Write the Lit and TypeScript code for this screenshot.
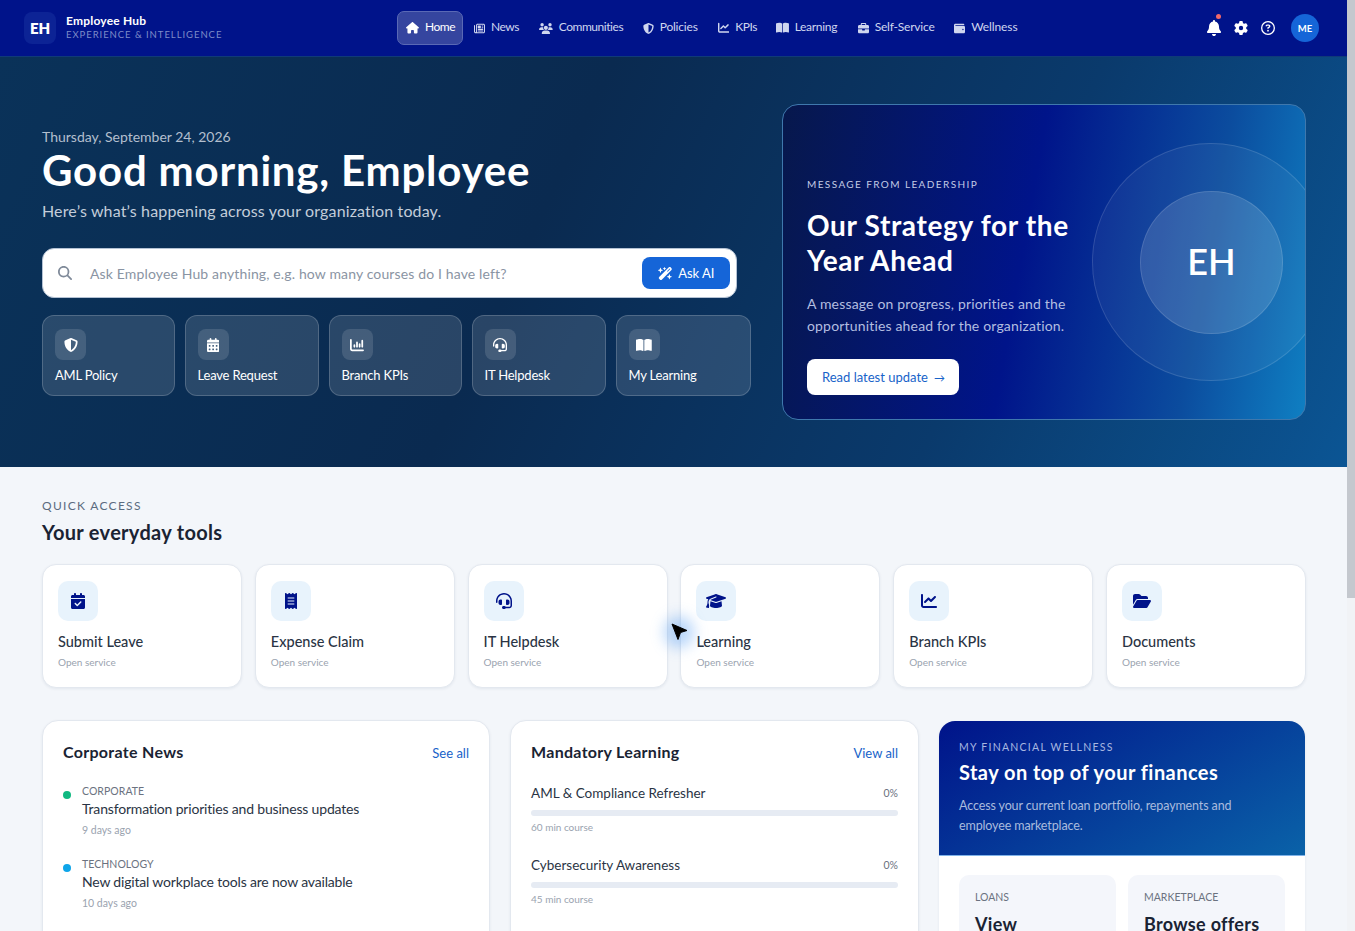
import { LitElement, html, css, svg } from "lit";
import { customElement } from "lit/decorators.js";

const I: Record<string, [number, string]> = {
  house: [576, "M575.8 255.5c0 18-15 32.1-32 32.1h-32l.7 160.2c0 2.7-.2 5.4-.5 8.1V472c0 22.1-17.9 40-40 40H456c-1.1 0-2.2 0-3.3-.1c-1.4 .1-2.8 .1-4.2 .1H416 392c-22.1 0-40-17.9-40-40V448 384c0-17.7-14.3-32-32-32H256c-17.7 0-32 14.3-32 32v64 24c0 22.1-17.9 40-40 40H160 128.1c-1.5 0-3-.1-4.5-.2c-1.2 .1-2.4 .2-3.6 .2H104c-22.1 0-40-17.9-40-40V360c0-.9 0-1.9 .1-2.8V287.6H32c-18 0-32-14-32-32.1c0-9 3-17 10-24L266.4 8c7-7 15-8 22-8s15 2 21 7L564.8 231.5c8 7 12 15 11 24z"],
  search: [512, "M416 208c0 45.9-14.9 88.3-40 122.7L502.6 457.4c12.5 12.5 12.5 32.8 0 45.3s-32.8 12.5-45.3 0L330.7 376c-34.4 25.2-76.8 40-122.7 40C93.1 416 0 322.9 0 208S93.1 0 208 0S416 93.1 416 208zM208 352a144 144 0 1 0 0-288 144 144 0 1 0 0 288z"],
  bell: [448, "M224 0c-17.7 0-32 14.3-32 32V51.2C119 66 64 130.6 64 208v18.8c0 47-17.3 92.4-48.5 127.6l-7.4 8.3c-8.4 9.4-10.4 22.9-5.3 34.4S19.4 416 32 416H416c12.6 0 24-7.4 29.2-18.9s3.1-25-5.3-34.4l-7.4-8.3C401.3 319.2 384 273.9 384 226.8V208c0-77.4-55-142-128-156.8V32c0-17.7-14.3-32-32-32zm45.3 493.3c12-12 18.7-28.3 18.7-45.3H224 160c0 17 6.7 33.3 18.7 45.3s28.3 18.7 45.3 18.7s33.3-6.7 45.3-18.7z"],
  gear: [512, "M495.9 166.6c3.2 8.7 .5 18.4-6.4 24.6l-43.3 39.4c1.1 8.3 1.7 16.8 1.7 25.4s-.6 17.1-1.7 25.4l43.3 39.4c6.9 6.2 9.6 15.9 6.4 24.6c-4.4 11.9-9.7 23.3-15.8 34.3l-4.7 8.1c-6.6 11-14 21.4-22.1 31.2c-5.9 7.2-15.7 9.6-24.5 6.8l-55.7-17.7c-13.4 10.3-28.2 18.9-44 25.4l-12.5 57.1c-2 9.1-9 16.3-18.2 17.8c-13.8 2.3-28 3.5-42.5 3.5s-28.7-1.2-42.5-3.5c-9.2-1.5-16.2-8.7-18.2-17.8l-12.5-57.1c-15.8-6.5-30.6-15.1-44-25.4L83.1 425.9c-8.8 2.8-18.6 .3-24.5-6.8c-8.1-9.8-15.5-20.2-22.1-31.2l-4.7-8.1c-6.1-11-11.4-22.4-15.8-34.3c-3.2-8.7-.5-18.4 6.4-24.6l43.3-39.4C64.6 273.1 64 264.6 64 256s.6-17.1 1.7-25.4L22.4 191.2c-6.9-6.2-9.6-15.9-6.4-24.6c4.4-11.9 9.7-23.3 15.8-34.3l4.7-8.1c6.6-11 14-21.4 22.1-31.2c5.9-7.2 15.7-9.6 24.5-6.8l55.7 17.7c13.4-10.3 28.2-18.9 44-25.4l12.5-57.1c2-9.1 9-16.3 18.2-17.8C227.3 1.2 241.5 0 256 0s28.7 1.2 42.5 3.5c9.2 1.5 16.2 8.7 18.2 17.8l12.5 57.1c15.8 6.5 30.6 15.1 44 25.4l55.7-17.7c8.8-2.8 18.6-.3 24.5 6.8c8.1 9.8 15.5 20.2 22.1 31.2l4.7 8.1c6.1 11 11.4 22.4 15.8 34.3zM256 336a80 80 0 1 0 0-160 80 80 0 1 0 0 160z"],
  cap: [640, "M320 32c-8.1 0-16.1 1.4-23.7 4.1L15.8 137.4C6.3 140.9 0 149.9 0 160s6.3 19.1 15.8 22.6l57.9 20.9C57.3 229.3 48 259.8 48 291.9v28.1c0 28.4-10.8 57.7-22.3 80.8c-6.5 13-13.9 25.8-22.5 37.6C0 442.7-.9 448.3 .9 453.4s6 8.9 11.2 10.2l64 16c4.2 1.1 8.7 .3 12.4-2s6.3-6.1 7.1-10.4c8.6-42.8 4.3-81.2-2.1-108.7C90.3 344.3 86 329.8 80 316.5V291.9c0-30.2 10.2-58.7 27.9-81.5c12.9-15.5 29.6-28 49.2-35.7l157-61.7c8.2-3.2 17.5 .8 20.7 9s-.8 17.5-9 20.7l-157 61.7c-12.4 4.9-23.3 12.4-32.2 21.6l159.6 57.6c7.6 2.7 15.6 4.1 23.7 4.1s16.1-1.4 23.7-4.1L624.2 182.6c9.5-3.4 15.8-12.5 15.8-22.6s-6.3-19.1-15.8-22.6L343.7 36.1C336.1 33.4 328.1 32 320 32zM128 408c0 35.3 86 72 192 72s192-36.7 192-72L496.7 262.6 354.5 314c-11.1 4-22.8 6-34.5 6s-23.5-2-34.5-6L143.3 262.6 128 408z"],
  folder: [576, "M88.7 223.8L0 375.8V96C0 60.7 28.7 32 64 32H181.5c17 0 33.3 6.7 45.3 18.7l26.5 26.5c12 12 28.3 18.7 45.3 18.7H416c35.3 0 64 28.7 64 64v32H144c-22.8 0-43.8 12.1-55.3 31.8zm27.6 16.1C122.1 230 132.6 224 144 224H544c11.5 0 22 6.1 27.7 16.1s5.7 22.2-.1 32.1l-112 192C453.9 474 443.4 480 432 480H32c-11.5 0-22-6.1-27.7-16.1s-5.7-22.2 .1-32.1l112-192z"],
  line: [512, "M64 64c0-17.7-14.3-32-32-32S0 46.3 0 64V400c0 44.2 35.8 80 80 80H480c17.7 0 32-14.3 32-32s-14.3-32-32-32H80c-8.8 0-16-7.2-16-16V64zm406.6 86.6c12.5-12.5 12.5-32.8 0-45.3s-32.8-12.5-45.3 0L320 210.7l-57.4-57.4c-12.5-12.5-32.8-12.5-45.3 0l-112 112c-12.5 12.5-12.5 32.8 0 45.3s32.8 12.5 45.3 0L240 221.3l57.4 57.4c12.5 12.5 32.8 12.5 45.3 0l128-128z"],
  book: [576, "M249.6 471.5c10.8 3.8 22.4-4.1 22.4-15.5V78.6c0-4.2-1.6-8.4-5-11C247.4 52 202.4 32 144 32C93.5 32 46.3 45.3 18.1 56.1C6.8 60.5 0 71.7 0 83.8V454.1c0 11.9 12.8 20.2 24.1 16.5C55.6 460.1 105.5 448 144 448c33.9 0 79 14 105.6 23.5zm76.8 0C353 462 398.1 448 432 448c38.5 0 88.4 12.1 119.9 22.6c11.3 3.8 24.1-4.6 24.1-16.5V83.8c0-12.1-6.8-23.3-18.1-27.6C529.7 45.3 482.5 32 432 32c-58.4 0-103.4 20-123 35.6c-3.3 2.6-5 6.8-5 11V456c0 11.4 11.7 19.3 22.4 15.5z"],
  shield: [512, "M256 0c4.6 0 9.2 1 13.4 2.9L457.7 82.8c22 9.3 38.4 31 38.3 57.2c-.5 99.2-41.3 280.7-213.6 363.2c-16.7 8-36.1 8-52.8 0C57.3 420.7 16.5 239.2 16 140c-.1-26.2 16.3-47.9 38.3-57.2L242.7 2.9C246.8 1 251.4 0 256 0zm0 66.8V444.8C394 378 431.1 230.1 432 141.4L256 66.8l0 0z"],
  users: [640, "M144 0a80 80 0 1 1 0 160A80 80 0 1 1 144 0zM512 0a80 80 0 1 1 0 160A80 80 0 1 1 512 0zM0 298.7C0 239.8 47.8 192 106.7 192h42.7c15.9 0 31 3.5 44.6 9.7c-1.3 7.2-1.9 14.7-1.9 22.3c0 38.2 16.8 72.5 43.3 96c-.2 0-.4 0-.7 0H21.3C9.6 320 0 310.4 0 298.7zM405.3 320c-.2 0-.4 0-.7 0c26.6-23.5 43.3-57.8 43.3-96c0-7.6-.7-15-1.9-22.3c13.6-6.3 28.7-9.7 44.6-9.7h42.7C592.2 192 640 239.8 640 298.7c0 11.8-9.6 21.3-21.3 21.3H405.3zM224 224a96 96 0 1 1 192 0 96 96 0 1 1 -192 0zM128 485.3C128 411.7 187.7 352 261.3 352H378.7C452.3 352 512 411.7 512 485.3c0 14.7-11.9 26.7-26.7 26.7H154.7c-14.7 0-26.7-11.9-26.7-26.7z"],
  news: [512, "M168 80c-13.3 0-24 10.7-24 24V408c0 8.4-1.4 16.5-4.1 24H440c13.3 0 24-10.7 24-24V104c0-13.3-10.7-24-24-24H168zM72 480c-39.8 0-72-32.2-72-72V112C0 98.7 10.7 88 24 88s24 10.7 24 24V408c0 13.3 10.7 24 24 24s24-10.7 24-24V104c0-39.8 32.2-72 72-72H440c39.8 0 72 32.2 72 72V408c0 39.8-32.2 72-72 72H72zM176 136c0-13.3 10.7-24 24-24h96c13.3 0 24 10.7 24 24v80c0 13.3-10.7 24-24 24H200c-13.3 0-24-10.7-24-24V136zm200-24h32c13.3 0 24 10.7 24 24s-10.7 24-24 24H376c-13.3 0-24-10.7-24-24s10.7-24 24-24zm0 80h32c13.3 0 24 10.7 24 24s-10.7 24-24 24H376c-13.3 0-24-10.7-24-24s10.7-24 24-24zM200 272H408c13.3 0 24 10.7 24 24s-10.7 24-24 24H200c-13.3 0-24-10.7-24-24s10.7-24 24-24zm0 80H408c13.3 0 24 10.7 24 24s-10.7 24-24 24H200c-13.3 0-24-10.7-24-24s10.7-24 24-24z"],
  brief: [512, "M184 48H328c4.4 0 8 3.6 8 8V96H176V56c0-4.4 3.6-8 8-8zm-56 8V96H64C28.7 96 0 124.7 0 160v96H192 320 512V160c0-35.3-28.7-64-64-64H384V56c0-30.9-25.1-56-56-56H184c-30.9 0-56 25.1-56 56zM512 288H320v32c0 17.7-14.3 32-32 32H224c-17.7 0-32-14.3-32-32V288H0V416c0 35.3 28.7 64 64 64H448c35.3 0 64-28.7 64-64V288z"],
  wallet: [512, "M64 32C28.7 32 0 60.7 0 96V416c0 35.3 28.7 64 64 64H448c35.3 0 64-28.7 64-64V192c0-35.3-28.7-64-64-64H80c-8.8 0-16-7.2-16-16s7.2-16 16-16H448c17.7 0 32-14.3 32-32s-14.3-32-32-32H64zM416 272a32 32 0 1 1 0 64 32 32 0 1 1 0-64z"],
  help: [512, "M464 256A208 208 0 1 0 48 256a208 208 0 1 0 416 0zM0 256a256 256 0 1 1 512 0A256 256 0 1 1 0 256zm169.8-90.7c7.9-22.3 29.1-37.3 52.8-37.3h58.3c34.9 0 63.1 28.3 63.1 63.1c0 22.6-12.1 43.5-31.7 54.8L280 264.4c-.2 13-10.9 23.6-24 23.6c-13.3 0-24-10.7-24-24V250.5c0-8.6 4.6-16.5 12.1-20.8l44.3-25.4c4.7-2.7 7.6-7.7 7.6-13.1c0-8.4-6.8-15.1-15.1-15.1H222.6c-3.4 0-6.4 2.1-7.5 5.3l-.4 1.2c-4.4 12.5-18.2 19-30.6 14.6s-19-18.2-14.6-30.6l.4-1.2zM224 352a32 32 0 1 1 64 0 32 32 0 1 1 -64 0z"],
  days: [448, "M128 0c17.7 0 32 14.3 32 32V64H288V32c0-17.7 14.3-32 32-32s32 14.3 32 32V64h48c26.5 0 48 21.5 48 48v48H0V112C0 85.5 21.5 64 48 64H96V32c0-17.7 14.3-32 32-32zM0 192H448V464c0 26.5-21.5 48-48 48H48c-26.5 0-48-21.5-48-48V192zm64 80v32c0 8.8 7.2 16 16 16h32c8.8 0 16-7.2 16-16V272c0-8.8-7.2-16-16-16H80c-8.8 0-16 7.2-16 16zm128 0v32c0 8.8 7.2 16 16 16h32c8.8 0 16-7.2 16-16V272c0-8.8-7.2-16-16-16H208c-8.8 0-16 7.2-16 16zm144-16c-8.8 0-16 7.2-16 16v32c0 8.8 7.2 16 16 16h32c8.8 0 16-7.2 16-16V272c0-8.8-7.2-16-16-16H336zM64 400v32c0 8.8 7.2 16 16 16h32c8.8 0 16-7.2 16-16V400c0-8.8-7.2-16-16-16H80c-8.8 0-16 7.2-16 16zm144-16c-8.8 0-16 7.2-16 16v32c0 8.8 7.2 16 16 16h32c8.8 0 16-7.2 16-16V400c0-8.8-7.2-16-16-16H208zm112 16v32c0 8.8 7.2 16 16 16h32c8.8 0 16-7.2 16-16V400c0-8.8-7.2-16-16-16H336c-8.8 0-16 7.2-16 16z"],
  check: [448, "M128 0c17.7 0 32 14.3 32 32V64H288V32c0-17.7 14.3-32 32-32s32 14.3 32 32V64h48c26.5 0 48 21.5 48 48v48H0V112C0 85.5 21.5 64 48 64H96V32c0-17.7 14.3-32 32-32zM0 192H448V464c0 26.5-21.5 48-48 48H48c-26.5 0-48-21.5-48-48V192zM329 305c9.4-9.4 9.4-24.6 0-33.9s-24.6-9.4-33.9 0l-95 95-47-47c-9.4-9.4-24.6-9.4-33.9 0s-9.4 24.6 0 33.9l64 64c9.4 9.4 24.6 9.4 33.9 0L329 305z"],
  receipt: [384, "M14 2.2C22.5-1.7 32.5-.3 39.6 5.8L80 40.4 120.4 5.8c9-7.7 22.3-7.7 31.2 0L192 40.4 232.4 5.8c9-7.7 22.3-7.7 31.2 0L304 40.4 344.4 5.8c7.1-6.1 17.1-7.5 25.6-3.6s14 12.4 14 21.8V488c0 9.4-5.5 17.9-14 21.8s-18.5 2.5-25.6-3.6L304 471.6l-40.4 34.6c-9 7.7-22.3 7.7-31.2 0L192 471.6l-40.4 34.6c-9 7.7-22.3 7.7-31.2 0L80 471.6 39.6 506.2c-7.1 6.1-17.1 7.5-25.6 3.6S0 497.4 0 488V24C0 14.6 5.5 6.1 14 2.2zM96 144c-8.8 0-16 7.2-16 16s7.2 16 16 16H288c8.8 0 16-7.2 16-16s-7.2-16-16-16H96zM80 352c0 8.8 7.2 16 16 16H288c8.8 0 16-7.2 16-16s-7.2-16-16-16H96c-8.8 0-16 7.2-16 16zM96 240c-8.8 0-16 7.2-16 16s7.2 16 16 16H288c8.8 0 16-7.2 16-16s-7.2-16-16-16H96z"],
  headset: [512, "M256 48C141.1 48 48 141.1 48 256v40c0 13.3-10.7 24-24 24s-24-10.7-24-24V256C0 114.6 114.6 0 256 0S512 114.6 512 256V400.1c0 48.6-39.4 88-88.1 88L313.6 488c-8.3 14.3-23.8 24-41.6 24H240c-26.5 0-48-21.5-48-48s21.5-48 48-48h32c17.8 0 33.3 9.7 41.6 24l110.4 .1c22.1 0 40-17.9 40-40V256c0-114.9-93.1-208-208-208zM144 208h16c17.7 0 32 14.3 32 32V352c0 17.7-14.3 32-32 32H144c-35.3 0-64-28.7-64-64V272c0-35.3 28.7-64 64-64zm224 0c35.3 0 64 28.7 64 64v48c0 35.3-28.7 64-64 64H352c-17.7 0-32-14.3-32-32V240c0-17.7 14.3-32 32-32h16z"],
  column: [512, "M32 32c17.7 0 32 14.3 32 32V400c0 8.8 7.2 16 16 16H480c17.7 0 32 14.3 32 32s-14.3 32-32 32H80c-44.2 0-80-35.8-80-80V64C0 46.3 14.3 32 32 32zM160 224c17.7 0 32 14.3 32 32v64c0 17.7-14.3 32-32 32s-32-14.3-32-32V256c0-17.7 14.3-32 32-32zm128-64V320c0 17.7-14.3 32-32 32s-32-14.3-32-32V160c0-17.7 14.3-32 32-32s32 14.3 32 32zm64 32c17.7 0 32 14.3 32 32v96c0 17.7-14.3 32-32 32s-32-14.3-32-32V224c0-17.7 14.3-32 32-32zM480 96V320c0 17.7-14.3 32-32 32s-32-14.3-32-32V96c0-17.7 14.3-32 32-32s32 14.3 32 32z"],
  wand: [576, "M234.7 42.7L197 56.8c-3 1.1-5 4-5 7.2s2 6.1 5 7.2l37.7 14.1L248.8 123c1.1 3 4 5 7.2 5s6.1-2 7.2-5l14.1-37.7L315 71.2c3-1.1 5-4 5-7.2s-2-6.1-5-7.2L277.3 42.7 263.2 5c-1.1-3-4-5-7.2-5s-6.1 2-7.2 5L234.7 42.7zM46.1 395.4c-18.7 18.7-18.7 49.1 0 67.9l34.6 34.6c18.7 18.7 49.1 18.7 67.9 0L529.9 116.5c18.7-18.7 18.7-49.1 0-67.9L495.3 14.1c-18.7-18.7-49.1-18.7-67.9 0L46.1 395.4zM484.6 82.6l-105 105-23.3-23.3 105-105 23.3 23.3zM7.5 117.2C3 118.9 0 123.2 0 128s3 9.1 7.5 10.8L64 160l21.2 56.5c1.7 4.5 6 7.5 10.8 7.5s9.1-3 10.8-7.5L128 160l56.5-21.2c4.5-1.7 7.5-6 7.5-10.8s-3-9.1-7.5-10.8L128 96 106.8 39.5C105.1 35 100.8 32 96 32s-9.1 3-10.8 7.5L64 96 7.5 117.2zm352 256c-4.5 1.7-7.5 6-7.5 10.8s3 9.1 7.5 10.8L416 416l21.2 56.5c1.7 4.5 6 7.5 10.8 7.5s9.1-3 10.8-7.5L480 416l56.5-21.2c4.5-1.7 7.5-6 7.5-10.8s-3-9.1-7.5-10.8L480 352l-21.2-56.5c-1.7-4.5-6-7.5-10.8-7.5s-9.1 3-10.8 7.5L416 352l-56.5 21.2z"],
};

const icon = (n: string, h: number) => {
  const [w, d] = I[n];
  return html`<svg class="ic" width=${(h * w) / 512} height=${h} viewBox="0 0 ${w} 512" fill="currentColor" aria-hidden="true">${svg`<path d=${d}></path>`}</svg>`;
};

const NAV: [string, string, number, number, number][] = [
  ["Home", "house", 11.5, 29, -0.45], ["News", "news", 11, 28, -0.45], ["Communities", "users", 11, 64, -0.45], ["Policies", "shield", 11, 38, -0.2],
  ["KPIs", "line", 11.5, 20.5, -0.45], ["Learning", "book", 11.5, 43, -0.3], ["Self-Service", "brief", 11, 59.5, -0.2], ["Wellness", "wallet", 11, 47, -0.1],
];
const CHIPS: [string, string][] = [["AML Policy", "shield"], ["Leave Request", "days"], ["Branch KPIs", "column"], ["IT Helpdesk", "headset"], ["My Learning", "book"]];
const TOOLS: [string, string][] = [["Submit Leave", "check"], ["Expense Claim", "receipt"], ["IT Helpdesk", "headset"], ["Learning", "cap"], ["Branch KPIs", "line"], ["Documents", "folder"]];
const NEWS = [
  { c: "CORPORATE", t: "Transformation priorities and business updates", a: "9 days ago", k: "#10b981" },
  { c: "TECHNOLOGY", t: "New digital workplace tools are now available", a: "10 days ago", k: "#0ea5e9" },
];
const COURSES = [
  { t: "AML & Compliance Refresher", m: "60 min course" },
  { t: "Cybersecurity Awareness", m: "45 min course" },
];

@customElement("app-root")
export class AppRoot extends LitElement {
  static styles = css`
    :host { display: flex; height: 100vh; position: relative; overflow: hidden; font-family: "Lato", "Noto Sans", sans-serif; color: #1a2333; }
    .page { flex: 1; min-width: 0; height: 100%; overflow: hidden; background: #f3f6fa; }
    .rail { flex: none; width: 8px; height: 100%; background: #f1f3f6; }
    .thumb { height: 598px; background: #c4c8ce; }
    * { box-sizing: border-box; }
    .ic { display: block; flex: none; }
    .top { height: 57px; background: #00138a; border-bottom: 1px solid #0f3a78; display: flex; align-items: center; padding: 0 28px 0 24px; color: #fff; }
    .brand { display: flex; align-items: center; gap: 10px; width: 373px; }
    .bn { padding-bottom: 2px; }
    .logo { width: 32px; height: 32px; border-radius: 8px; background: #0c2395; display: grid; place-items: center; font-weight: 800; font-size: 15px; padding-bottom: 1px; }
    .bt { font-size: 12px; font-weight: 700; line-height: 14px; letter-spacing: .2px; }
    .bs { font-size: 9.5px; line-height: 13px; letter-spacing: .95px; color: #7e8cc8; }
    .nav { display: flex; gap: 2px; flex: 1; }
    .nav a { display: flex; align-items: center; gap: 6px; height: 34px; padding: 0 8px; border-radius: 7px; font-size: 12px; color: #cfd6ef; border: 1px solid transparent; white-space: nowrap; }
    .nav a span { display: block; padding-bottom: 4px; }
    .nav a.on { background: #35459f; border-color: #5a69b5; color: #fff; }
    .tools { display: flex; align-items: center; gap: 13px; }
    .tools .bell { position: relative; }
    .tools .dot { position: absolute; width: 5px; height: 5px; border-radius: 50%; background: #f0686a; right: 0; top: -6px; }
    .av { width: 28px; height: 28px; border-radius: 50%; background: #1565d8; display: grid; place-items: center; font-size: 9.5px; font-weight: 700; margin-left: 3px; }

    .hero { height: 410px; padding: 47px 41px 47px 42px; display: grid; grid-template-columns: minmax(0, 1fr) 524px; gap: 31px; align-items: center; color: #fff;
      background: linear-gradient(115deg, #0a3259 0%, #0a2a50 40%, #0a3a6c 72%, #0b5594 100%); }
    .date { font-size: 14px; line-height: 17px; color: #b3bfce; }
    h1 { margin: 0; font-size: 42px; line-height: 50px; font-weight: 700; letter-spacing: .8px; }
    .lead { font-size: 16px; line-height: 22px; color: #c3cdda; margin-top: 5px; letter-spacing: .15px; }
    .search { width: 695px; height: 50px; margin-top: 26px; background: #fff; border-radius: 12px; border: 1px solid #b4c2d4; display: flex; align-items: center; padding: 0 6px 0 15px; color: #7f8a99; }
    .ph { margin-left: 18px; flex: 1; font-size: 14px; color: #8a94a3; letter-spacing: .14px; }
    .ask { height: 32px; width: 88px; border-radius: 8px; background: #1565d8; color: #fff; display: flex; align-items: center; justify-content: center; gap: 6px; font-size: 13px; }
    .chips { display: grid; grid-template-columns: 132.5px 134px 133px 134px 135px; gap: 10px; margin-top: 17px; }
    .chip { height: 81px; border-radius: 12px; background: rgba(255,255,255,.13); border: 1px solid rgba(255,255,255,.18); padding: 13px 12px; }
    .chip .b { width: 31px; height: 31px; border-radius: 8px; background: rgba(255,255,255,.13); display: grid; place-items: center; }
    .chip .l { margin-top: 7px; font-size: 13px; line-height: 16px; letter-spacing: -.2px; }

    .lead-card { height: 316px; border-radius: 16px; border: 1px solid #3f78ad; overflow: hidden; position: relative; padding: 24px; display: flex; flex-direction: column; justify-content: flex-end;
      background: linear-gradient(100deg, #07184c 0%, #00148a 46%, #0b4c9e 78%, #0f7fc2 100%); }
    .ey { font-size: 10px; letter-spacing: 1.4px; color: #c3cbe6; line-height: 14px; position: relative; }
    .lc-t { font-size: 28px; line-height: 35px; font-weight: 700; margin-top: 17px; width: 290px; letter-spacing: .65px; position: relative; }
    .lc-p { font-size: 14px; line-height: 22px; color: #b3bee0; margin-top: 15px; width: 285px; letter-spacing: .17px; position: relative; }
    .rd { margin-top: 22px; height: 36px; width: 152px; background: #fff; border-radius: 8px; color: #1763c9; font-size: 13px; display: flex; align-items: center; padding-left: 15px; gap: 6px; position: relative; }
    .rd .ar { font-size: 11px; }
    .orb, .orb2 { position: absolute; border-radius: 50%; border: 1px solid rgba(255,255,255,.13); }
    .orb { width: 238px; height: 238px; left: 309px; top: 38px; background: rgba(255,255,255,.05); }
    .orb2 { width: 143px; height: 143px; left: 47px; top: 47px; background: rgba(255,255,255,.13); display: grid; place-items: center; font-size: 36px; font-weight: 600; color: #fff; padding-bottom: 4px; }

    .main { padding: 31px 41px 34px 42px; }
    .ql { font-size: 12px; line-height: 15px; letter-spacing: 1.3px; color: #5b6b7f; }
    h2 { margin: 6px 0 0; font-size: 20px; line-height: 27px; font-weight: 700; color: #1a2333; letter-spacing: .3px; }
    .grid6 { display: grid; grid-template-columns: repeat(6, minmax(0, 1fr)); gap: 12.8px; margin-top: 18px; }
    .tool { height: 124px; background: #fff; border: 1px solid #e3e8ef; border-radius: 14px; padding: 16px 15px; box-shadow: 0 1px 3px rgba(16,42,90,.07); }
    .tool .b { width: 40px; height: 40px; border-radius: 10px; background: #e8f3fc; display: grid; place-items: center; color: #00138a; }
    .tool .n { margin-top: 11px; font-size: 14.5px; line-height: 20px; font-weight: 500; color: #2a3444; }
    .tool .s { margin-top: 3px; font-size: 10px; line-height: 14px; color: #9aa3af; }

    .dash { display: grid; grid-template-columns: 448px 409px 366px; gap: 20px; margin-top: 32px; min-height: 690px; }
    .card { background: #fff; border: 1px solid #e3e8ef; border-radius: 16px; box-shadow: 0 1px 3px rgba(16,42,90,.07); padding: 18px 20px 20px 20px; overflow: hidden; }
    .ch { display: flex; justify-content: space-between; align-items: center; height: 24px; }
    .ch b { font-size: 16px; font-weight: 700; color: #1a2333; letter-spacing: .3px; }
    .ch a { font-size: 13px; color: #1763c9; padding-top: 4px; }
    .list { margin-top: 18px; }
    .nw { display: flex; gap: 11px; height: 73px; padding-top: 3px; }
    .d { width: 8px; height: 8px; border-radius: 50%; margin-top: 7px; flex: none; }
    .nc { font-size: 10.5px; line-height: 14px; color: #6b7280; letter-spacing: .05px; }
    .nt { font-size: 14px; line-height: 20px; color: #2a3444; margin-top: 1px; letter-spacing: -.18px; }
    .na { font-size: 10.5px; line-height: 14px; color: #9aa3af; margin-top: 4px; }
    .cs { height: 72px; padding-top: 2px; }
    .ct { display: flex; justify-content: space-between; align-items: center; font-size: 13.5px; line-height: 20px; color: #2a3444; }
    .ct span { font-size: 10.5px; color: #6b7280; }
    .bar { height: 6px; border-radius: 3px; background: #e6ebf3; margin-top: 7px; }
    .cm { font-size: 10px; line-height: 14px; color: #9aa3af; margin-top: 4px; }
    .well { padding: 0; border: none; margin-top: 1px; }
    .wh { height: 135px; padding: 20px 20px 0; color: #fff; background: linear-gradient(150deg, #00138a 0%, #0a62a8 100%); border-bottom: 1px solid #7fb2e8; }
    .wl { font-size: 10.5px; line-height: 13px; letter-spacing: 1.25px; color: #a8b7e0; }
    .wt { font-size: 20px; line-height: 27px; font-weight: 700; margin-top: 5px; letter-spacing: .45px; }
    .wp { font-size: 12.5px; line-height: 20px; color: #a9bbde; margin-top: 10px; letter-spacing: -.12px; }
    .wb { display: grid; grid-template-columns: 1fr 1fr; gap: 12px; padding: 19px 20px 20px; }
    .box { height: 110px; border-radius: 10px; background: #f4f6fb; padding: 15px 16px; }
    .bl { font-size: 10.5px; line-height: 14px; color: #6b7280; }
    .bv { font-size: 18px; line-height: 24px; font-weight: 700; color: #1a2333; margin-top: 8px; letter-spacing: .3px; }

    .cursor { position: absolute; left: 658px; top: 610px; width: 42px; height: 44px; pointer-events: none; }
    .cursor::before { content: ""; position: absolute; left: 6px; top: 6px; width: 30px; height: 32px; border-radius: 50%; background: rgba(40,130,240,.32); filter: blur(7px); }
    .cursor svg { position: absolute; left: 13px; top: 13px; }
  `;

  render() {
    return html`
      <div class="page">
      <header class="top">
        <div class="brand">
          <div class="logo">EH</div>
          <div class="bn"><div class="bt">Employee Hub</div><div class="bs">EXPERIENCE &amp; INTELLIGENCE</div></div>
        </div>
        <nav class="nav">
          ${NAV.map(([t, i, s, w, l], x) => html`<a class=${x === 0 ? "on" : ""}>${icon(i, s)}<span style="width:${w}px;letter-spacing:${l}px">${t}</span></a>`)}
        </nav>
        <div class="tools">
          <span class="bell">${icon("bell", 16)}<span class="dot"></span></span>
          ${icon("gear", 14)}
          ${icon("help", 14)}
          <div class="av">ME</div>
        </div>
      </header>
      <section class="hero">
        <div>
          <div class="date">Thursday, September 24, 2026</div>
          <h1>Good morning, Employee</h1>
          <div class="lead">Here’s what’s happening across your organization today.</div>
          <div class="search">
            ${icon("search", 14)}
            <span class="ph">Ask Employee Hub anything, e.g. how many courses do I have left?</span>
            <div class="ask">${icon("wand", 13)}<span>Ask AI</span></div>
          </div>
          <div class="chips">
            ${CHIPS.map(([t, i]) => html`<div class="chip"><div class="b">${icon(i, 14)}</div><div class="l">${t}</div></div>`)}
          </div>
        </div>
        <div class="lead-card">
          <div class="orb"><div class="orb2">EH</div></div>
          <div class="ey">MESSAGE FROM LEADERSHIP</div>
          <div class="lc-t">Our Strategy for the Year Ahead</div>
          <div class="lc-p">A message on progress, priorities and the opportunities ahead for the organization.</div>
          <div class="rd"><span>Read latest update</span><span class="ar">→</span></div>
        </div>
      </section>
      <main class="main">
        <div class="ql">QUICK ACCESS</div>
        <h2>Your everyday tools</h2>
        <div class="grid6">
          ${TOOLS.map(([t, i]) => html`<div class="tool"><div class="b">${icon(i, 16)}</div><div class="n">${t}</div><div class="s">Open service</div></div>`)}
        </div>
        <div class="dash">
          <div class="card">
            <div class="ch"><b>Corporate News</b><a>See all</a></div>
            <div class="list">
              ${NEWS.map((n) => html`<div class="nw"><span class="d" style="background:${n.k}"></span><div><div class="nc">${n.c}</div><div class="nt">${n.t}</div><div class="na">${n.a}</div></div></div>`)}
            </div>
          </div>
          <div class="card">
            <div class="ch"><b>Mandatory Learning</b><a>View all</a></div>
            <div class="list">
              ${COURSES.map((c) => html`<div class="cs"><div class="ct">${c.t}<span>0%</span></div><div class="bar"></div><div class="cm">${c.m}</div></div>`)}
            </div>
          </div>
          <div class="card well">
            <div class="wh">
              <div class="wl">MY FINANCIAL WELLNESS</div>
              <div class="wt">Stay on top of your finances</div>
              <div class="wp">Access your current loan portfolio, repayments and employee marketplace.</div>
            </div>
            <div class="wb">
              <div class="box"><div class="bl">LOANS</div><div class="bv">View</div></div>
              <div class="box"><div class="bl">MARKETPLACE</div><div class="bv">Browse offers</div></div>
            </div>
          </div>
        </div>
      </main>
      </div>
      <div class="rail"><div class="thumb"></div></div>
      <div class="cursor"><svg width="17" height="18" viewBox="0 0 17 18"><path d="M1 1 L16 7.5 L9.5 9.5 L7 16.5 Z" fill="#000" stroke="#000" stroke-width="1" stroke-linejoin="round"/></svg></div>
    `;
  }
}
